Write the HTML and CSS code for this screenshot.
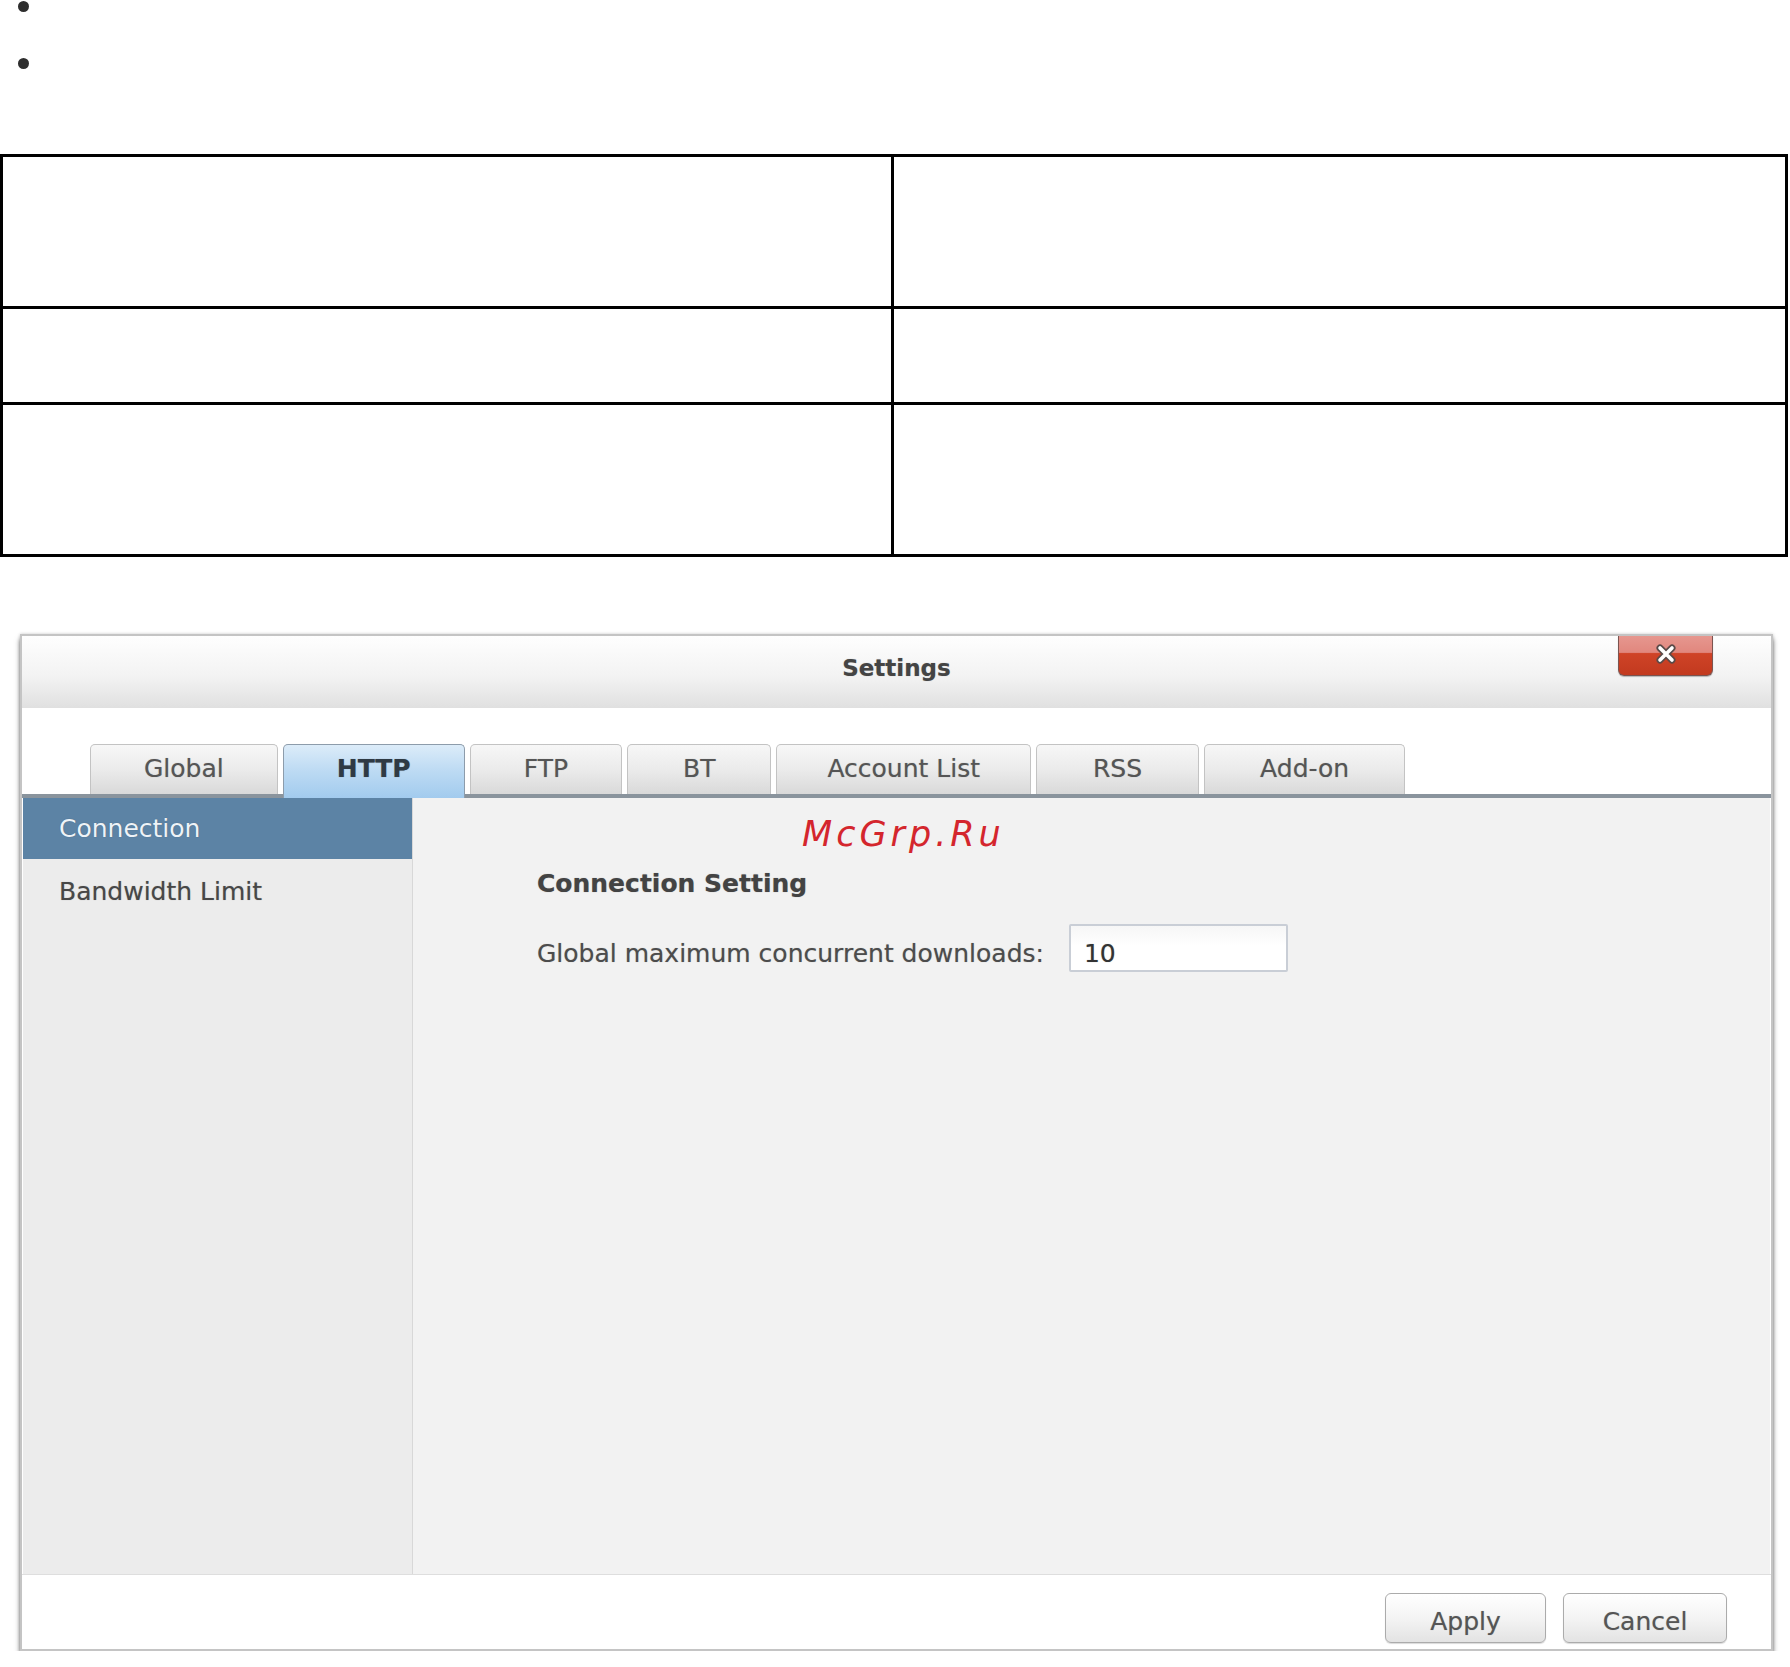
FILE: index.html
```html
<!DOCTYPE html>
<html lang="en">
<head>
<meta charset="utf-8">
<title>Settings</title>
<link rel="stylesheet" href="styles.css">
</head>
<body>
<ul class="bullets">
  <li></li>
  <li></li>
</ul>
<table class="grid">
  <tr class="tall"><td class="c1"></td><td class="c2"></td></tr>
  <tr class="short"><td></td><td></td></tr>
  <tr class="tall"><td></td><td></td></tr>
</table>

<div class="dialog">
  <div class="titlebar">
    <span class="title">Settings</span>
    <button class="close" aria-label="Close">
      <svg width="24" height="22" viewBox="0 0 24 22">
        <path d="M6 5 L18 17 M18 5 L6 17" stroke="#5a4a48" stroke-width="7" stroke-linecap="round" fill="none"/>
        <path d="M6 5 L18 17 M18 5 L6 17" stroke="#ffffff" stroke-width="3.6" stroke-linecap="round" fill="none"/>
      </svg>
    </button>
  </div>
  <div class="tabstrip">
    <div class="tab">Global</div>
    <div class="tab active">HTTP</div>
    <div class="tab">FTP</div>
    <div class="tab tab-bt">BT</div>
    <div class="tab tab-account">Account List</div>
    <div class="tab tab-rss">RSS</div>
    <div class="tab tab-addon">Add-on</div>
  </div>
  <div class="main">
    <div class="sidebar">
      <div class="nav-item selected">Connection</div>
      <div class="nav-item">Bandwidth Limit</div>
    </div>
    <div class="content">
      <div class="watermark">McGrp.Ru</div>
      <h3 class="section-title">Connection Setting</h3>
      <div class="field">
        <label class="field-label" for="maxdl">Global maximum concurrent downloads:</label>
        <input class="field-input" id="maxdl" type="text" value="10">
      </div>
    </div>
  </div>
  <div class="footer">
    <button class="btn btn-apply">Apply</button>
    <button class="btn btn-cancel">Cancel</button>
  </div>
</div>
</body>
</html>
```

FILE: styles.css
```css
html, body {
  margin: 0;
  padding: 0;
  background: #ffffff;
  font-family: "DejaVu Sans", Verdana, sans-serif;
}

/* empty bullet list */
.bullets {
  margin: 0;
  padding: 0 0 0 18px;
  list-style: none;
}
.bullets li {
  height: 57px;
  box-sizing: border-box;
  padding-top: 1px;
}
.bullets li::before {
  content: "";
  display: block;
  width: 11px;
  height: 11px;
  border-radius: 50%;
  background: #2e2e2e;
}

/* empty table */
.grid {
  margin-top: 40px;
  width: 1788px;
  box-sizing: border-box;
  table-layout: fixed;
  border-spacing: 0;
  border-left: 3px solid #000;
  border-top: 3px solid #000;
}
.grid td {
  box-sizing: border-box;
  padding: 0;
  border-right: 3px solid #000;
  border-bottom: 3px solid #000;
}
.grid .c1 { width: 891px; }
.grid .tall td { height: 152px; }
.grid .short td { height: 96px; }

/* dialog */
.dialog {
  position: relative;
  box-sizing: border-box;
  width: 1753px;
  margin: 77px 0 0 20px;
  border: 2px solid #c4c4c4;
  background: #ffffff;
  box-shadow: 0 5px 5px rgba(0, 0, 0, 0.55), 0 0 3px rgba(0, 0, 0, 0.2);
  color: #4a4a4a;
}

.titlebar {
  height: 72px;
  box-sizing: border-box;
  padding-bottom: 9px;
  display: flex;
  align-items: center;
  justify-content: center;
  background: linear-gradient(#fefefe 0%, #f3f3f3 55%, #e0e0e0 100%);
}
.title {
  font-size: 23px;
  font-weight: bold;
  color: #444444;
  text-shadow: 0 0 1px rgba(0, 0, 0, 0.3);
}

.close {
  position: absolute;
  top: 0;
  right: 58px;
  width: 95px;
  height: 40px;
  padding: 0;
  margin: 0;
  border: 1px solid #7b5450;
  border-top: none;
  border-radius: 0 0 6px 6px;
  background: linear-gradient(#e6978f 0%, #e1877e 42%, #cf4327 45%, #c23a1f 100%);
  display: flex;
  align-items: center;
  justify-content: center;
  box-shadow: 0 1px 1px rgba(0, 0, 0, 0.25);
}
.close svg {
  display: block;
  margin-top: -4px;
}

.tabstrip {
  height: 90px;
  box-sizing: border-box;
  padding: 0 0 0 68px;
  display: flex;
  align-items: flex-end;
  gap: 5px;
  border-bottom: 4px solid #8a949d;
}
.tab {
  height: 50px;
  box-sizing: border-box;
  padding: 0 53px;
  border: 1px solid #c3c3c3;
  border-bottom: none;
  border-radius: 5px 5px 0 0;
  background: linear-gradient(#f7f7f7 0%, #ebebeb 50%, #d9d9d9 100%);
  font-size: 25px;
  line-height: 48px;
  color: #555555;
  text-shadow: 0 0 1px rgba(0, 0, 0, 0.3);
  white-space: nowrap;
}
.tab-bt { padding: 0 55px; }
.tab-account { padding: 0 50px; }
.tab-rss { padding: 0 56px; }
.tab-addon { padding: 0 55px; }
.tab.active {
  height: 54px;
  margin-bottom: -4px;
  padding-bottom: 4px;
  position: relative;
  border-color: #8d9cab;
  background: linear-gradient(#dcecf9 0%, #bcdaf3 50%, #a2cbee 100%);
  font-weight: bold;
  color: #2f3a44;
}

.main {
  height: 776px;
  margin: 0 1px 0 1px;
  display: flex;
}
.sidebar {
  width: 390px;
  box-sizing: border-box;
  flex: none;
  background: #ececec;
  border-right: 1px solid #d8d8d8;
}
.nav-item {
  height: 66px;
  padding-left: 36px;
  font-size: 25px;
  line-height: 66px;
  color: #474747;
  text-shadow: 0 0 1px rgba(0, 0, 0, 0.3);
}
.nav-item.selected {
  height: 61px;
  line-height: 61px;
  background: #5c83a5;
  color: #eef3f8;
  text-shadow: 0 0 1px rgba(0, 0, 0, 0.3);
}

.content {
  position: relative;
  flex: 1;
  background: #f2f2f2;
  padding-left: 124px;
}
.watermark {
  position: absolute;
  left: 389px;
  top: 19px;
  font-size: 35px;
  line-height: 35px;
  font-style: italic;
  letter-spacing: 4px;
  color: #d4262d;
}
.section-title {
  margin: 71px 0 0 0;
  font-size: 25px;
  line-height: 30px;
  font-weight: bold;
  color: #434343;
  text-shadow: 0 0 1px rgba(0, 0, 0, 0.35);
}
.field {
  margin-top: 25px;
  display: flex;
  align-items: baseline;
  gap: 25px;
}
.field-label {
  font-size: 25px;
  color: #4c4c4c;
  text-shadow: 0 0 1px rgba(0, 0, 0, 0.3);
}
.field-input {
  width: 219px;
  height: 48px;
  box-sizing: border-box;
  margin: 0;
  padding: 10px 13px 0 13px;
  border: 2px solid #c9ced6;
  border-radius: 2px;
  background: linear-gradient(#f6f6f6 0%, #ffffff 45%);
  font-family: "DejaVu Sans", Verdana, sans-serif;
  font-size: 25px;
  color: #333333;
  text-shadow: 0 0 1px rgba(0, 0, 0, 0.35);
  outline: none;
}

.footer {
  height: 75px;
  box-sizing: border-box;
  border-top: 1px solid #dedede;
  padding: 18px 44px 0 0;
  display: flex;
  justify-content: flex-end;
  align-items: flex-start;
  gap: 17px;
}
.btn {
  height: 50px;
  box-sizing: border-box;
  margin: 0;
  padding: 6px 0 0 0;
  border: 1px solid #ababab;
  border-radius: 6px;
  background: linear-gradient(#ffffff 0%, #f4f4f4 50%, #e3e3e3 100%);
  box-shadow: 0 1px 1px rgba(0, 0, 0, 0.15);
  font-family: "DejaVu Sans", Verdana, sans-serif;
  font-size: 25px;
  color: #555555;
  text-shadow: 0 0 1px rgba(0, 0, 0, 0.3);
}
.btn-apply { width: 161px; }
.btn-cancel { width: 164px; }
```
